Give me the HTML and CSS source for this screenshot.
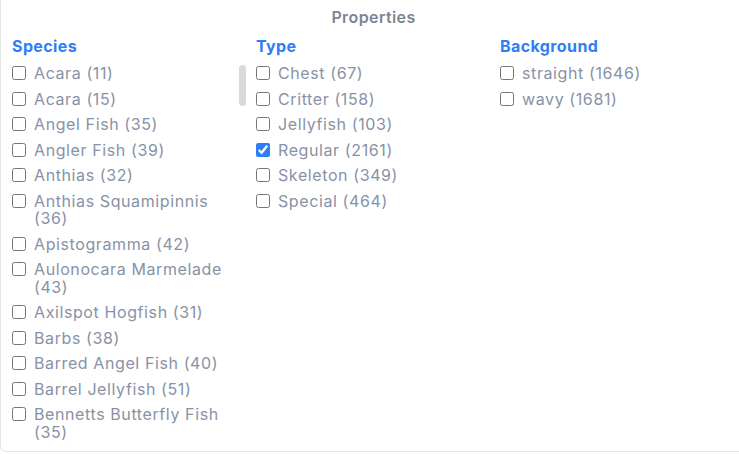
FILE: index.html
```html
<!DOCTYPE html>
<html>
<head>
    <title>Properties</title>
    <link rel="stylesheet" href="styles.css">
</head>
<body>
    <div class="card">
        <h3 class="title">Properties</h3>
        <div class="columns">
            <div class="group">
                <h4>Species</h4>
                <div class="list-wrap">
                    <div class="options">
                        <label><input type="checkbox"> Acara (11)</label>
                        <label><input type="checkbox"> Acara (15)</label>
                        <label><input type="checkbox"> Angel Fish (35)</label>
                        <label><input type="checkbox"> Angler Fish (39)</label>
                        <label><input type="checkbox"> Anthias (32)</label>
                        <label><input type="checkbox"> Anthias Squamipinnis (36)</label>
                        <label><input type="checkbox"> Apistogramma (42)</label>
                        <label><input type="checkbox"> Aulonocara Marmelade (43)</label>
                        <label><input type="checkbox"> Axilspot Hogfish (31)</label>
                        <label><input type="checkbox"> Barbs (38)</label>
                        <label><input type="checkbox"> Barred Angel Fish (40)</label>
                        <label><input type="checkbox"> Barrel Jellyfish (51)</label>
                        <label><input type="checkbox"> Bennetts Butterfly Fish (35)</label>
                    </div>
                    <div class="thumb"></div>
                </div>
            </div>
            <div class="group">
                <h4>Type</h4>
                <div class="options">
                    <label><input type="checkbox"> Chest (67)</label>
                    <label><input type="checkbox"> Critter (158)</label>
                    <label><input type="checkbox"> Jellyfish (103)</label>
                    <label><input type="checkbox" checked> Regular (2161)</label>
                    <label><input type="checkbox"> Skeleton (349)</label>
                    <label><input type="checkbox"> Special (464)</label>
                </div>
            </div>
            <div class="group">
                <h4>Background</h4>
                <div class="options">
                    <label><input type="checkbox"> straight (1646)</label>
                    <label><input type="checkbox"> wavy (1681)</label>
                </div>
            </div>
        </div>
    </div>
</body>
</html>
```

FILE: styles.css
```css
body {
    margin: 0;
    font-family: Inter, sans-serif;
    overflow: hidden;
    background-color: #fff;
}
.card {
    width: 747px;
    height: 460px;
    margin-top: -8px;
    border: 1px solid #e6e6e6;
    border-radius: 6px;
    box-sizing: border-box;
}
.title {
    margin: 14px 0 0;
    text-align: center;
    font-size: 16px;
    font-weight: 600;
    letter-spacing: 0.4px;
    color: #7d8595;
}
.columns {
    display: grid;
    grid-template-columns: 244px 244px 244px;
    padding: 0 11px;
}
.group h4 {
    margin: 9px 0 5px;
    font-size: 16px;
    font-weight: 700;
    letter-spacing: 0.4px;
    color: #2f7ef6;
}
.options {
    display: flex;
    flex-direction: column;
}
.list-wrap {
    position: relative;
    width: 234px;
}
.thumb {
    position: absolute;
    top: 4px;
    right: 0;
    width: 7px;
    height: 41px;
    border-radius: 4px;
    background-color: #d9d9de;
}
.list-wrap .options {
    width: 220px;
}
.options label {
    display: flex;
    align-items: flex-start;
    gap: 8px;
    padding: 4px 0;
    font-size: 16px;
    line-height: 17.5px;
    letter-spacing: 0.6px;
    color: #8892a6;
}
.options input[type="checkbox"] {
    flex: none;
    width: 14px;
    height: 14px;
    margin: 1px 0 0;
    accent-color: #2f7ef6;
}
```
